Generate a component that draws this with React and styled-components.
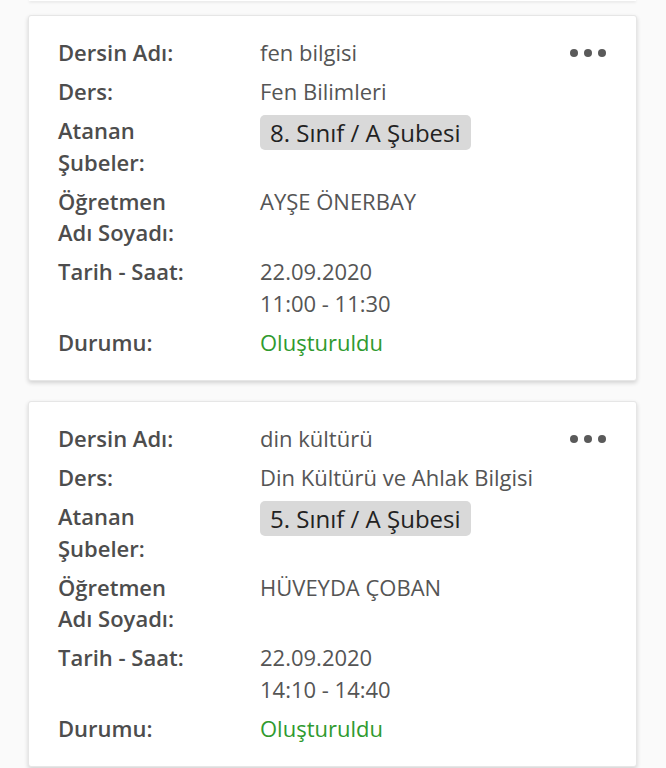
import React from "react";
import styled, { createGlobalStyle } from "styled-components";

const GlobalStyle = createGlobalStyle`
  html, body {
    margin: 0;
    padding: 0;
    background: #fafafa;
  }
  body {
    font-family: "Open Sans", "Noto Sans", sans-serif;
  }
`;

const lessons = [
  {
    id: 1,
    name: "fen bilgisi",
    course: "Fen Bilimleri",
    branches: ["8. Sınıf / A Şubesi"],
    teacher: "AYŞE ÖNERBAY",
    date: "22.09.2020",
    time: "11:00 - 11:30",
    status: "Oluşturuldu"
  },
  {
    id: 2,
    name: "din kültürü",
    course: "Din Kültürü ve Ahlak Bilgisi",
    branches: ["5. Sınıf / A Şubesi"],
    teacher: "HÜVEYDA ÇOBAN",
    date: "22.09.2020",
    time: "14:10 - 14:40",
    status: "Oluşturuldu"
  }
];

const StyledPage = styled.div`
  min-height: 768px;
  padding: 0 29px 0 28px;
  overflow: hidden;
`;

const StyledPrevEdge = styled.div`
  height: 1px;
  margin: 0 1px 14px;
  background: #fff;
  box-shadow: 0 1px 3px rgba(0, 0, 0, 0.18);
`;

const StyledList = styled.div`
  display: flex;
  flex-direction: column;
  gap: 20px;
`;

const StyledCard = styled.div`
  display: flex;
  align-items: flex-start;
  background: #fff;
  border: 1px solid #e6e6e6;
  border-radius: 3px;
  box-shadow: 0 2px 4px rgba(0, 0, 0, 0.16);
  padding: 21px 30px 22px 29px;
`;

const StyledDetails = styled.dl`
  flex: 1;
  display: grid;
  grid-template-columns: 140px 1fr;
  column-gap: 62px;
  row-gap: 7.5px;
  margin: 0;
  font-size: 22px;
  line-height: 31.5px;
`;

const StyledLabel = styled.dt`
  font-weight: 600;
  color: #4d4d4d;
`;

const StyledValue = styled.dd`
  margin: 0;
  color: ${p => (p.$status ? "#2f9a2f" : "#555")};
`;

const StyledChipRow = styled.dd`
  margin: 0;
  display: flex;
  flex-wrap: wrap;
  align-items: flex-start;
  gap: 6px;
`;

const StyledChip = styled.span`
  display: inline-block;
  background: #d9d9d9;
  color: #222;
  border-radius: 5px;
  font-size: 24px;
  line-height: 35px;
  padding: 0 10px;
`;

const StyledMenuButton = styled.button`
  display: flex;
  gap: 6px;
  align-items: center;
  border: 0;
  background: none;
  padding: 0;
  margin-top: 12px;
  cursor: pointer;

  span {
    width: 8px;
    height: 8px;
    border-radius: 50%;
    background: #5a5a5a;
  }
`;

const LessonCard = ({ lesson }) => (
  <StyledCard>
    <StyledDetails>
      <StyledLabel>Dersin Adı:</StyledLabel>
      <StyledValue>{lesson.name}</StyledValue>

      <StyledLabel>Ders:</StyledLabel>
      <StyledValue>{lesson.course}</StyledValue>

      <StyledLabel>Atanan Şubeler:</StyledLabel>
      <StyledChipRow>
        {lesson.branches.map(b => (
          <StyledChip key={b}>{b}</StyledChip>
        ))}
      </StyledChipRow>

      <StyledLabel>Öğretmen Adı Soyadı:</StyledLabel>
      <StyledValue>{lesson.teacher}</StyledValue>

      <StyledLabel>Tarih - Saat:</StyledLabel>
      <StyledValue>
        {lesson.date}
        <br />
        {lesson.time}
      </StyledValue>

      <StyledLabel>Durumu:</StyledLabel>
      <StyledValue $status>{lesson.status}</StyledValue>
    </StyledDetails>
    <StyledMenuButton aria-label="Menü">
      <span />
      <span />
      <span />
    </StyledMenuButton>
  </StyledCard>
);

const App = () => (
  <StyledPage>
    <GlobalStyle />
    <StyledPrevEdge />
    <StyledList>
      {lessons.map(l => (
        <LessonCard key={l.id} lesson={l} />
      ))}
    </StyledList>
  </StyledPage>
);

export default App;
